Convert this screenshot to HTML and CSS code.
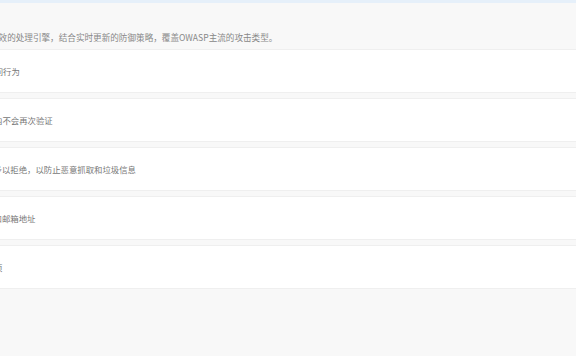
FILE: index.html
```html
<!DOCTYPE html>
<html lang="zh-CN">
<head>
    <meta charset="UTF-8">
    <meta name="viewport" content="width=device-width, initial-scale=1.0">
    <title>防护设置</title>
    <link rel="stylesheet" href="styles.css">
</head>
<body>
    <div class="topbar"></div>
    <div class="page">
        <p class="intro">采用领先的语义分析与高效的处理引擎，结合实时更新的防御策略，覆盖OWASP主流的攻击类型。</p>
        <div class="item-list">
            <div class="item">拦截 Bot 扫描等异常的访问行为</div>
            <div class="item">通过验证的访客在有效期内不会再次验证</div>
            <div class="item">对来自可疑IP的频繁请求予以拒绝，以防止恶意抓取和垃圾信息</div>
            <div class="item">加密网页源码中出现的IP和邮箱地址</div>
            <div class="item">支持按站点单独配置各选项</div>
        </div>
    </div>
</body>
</html>
```

FILE: styles.css
```css
body {
    margin: 0;
    padding: 0;
    background-color: #f8f8f8;
    font-family: "Noto Sans CJK SC", "Liberation Sans", sans-serif;
    overflow: hidden;
}
.topbar {
    height: 3px;
    background-color: #e6f0fa;
}
.page {
    margin-left: -116px;
}
.intro {
    margin: 0;
    padding: 28px 20px 0;
    font-size: 8.6px;
    line-height: 12px;
    color: #888;
    white-space: nowrap;
}
.item-list {
    margin-top: 6px;
}
.item {
    display: flex;
    align-items: center;
    height: 42px;
    padding: 0 18px;
    margin-bottom: 5px;
    background-color: #fff;
    border-top: 1px solid #efefef;
    border-bottom: 1px solid #efefef;
    font-size: 8.4px;
    color: #777;
    white-space: nowrap;
}
```
